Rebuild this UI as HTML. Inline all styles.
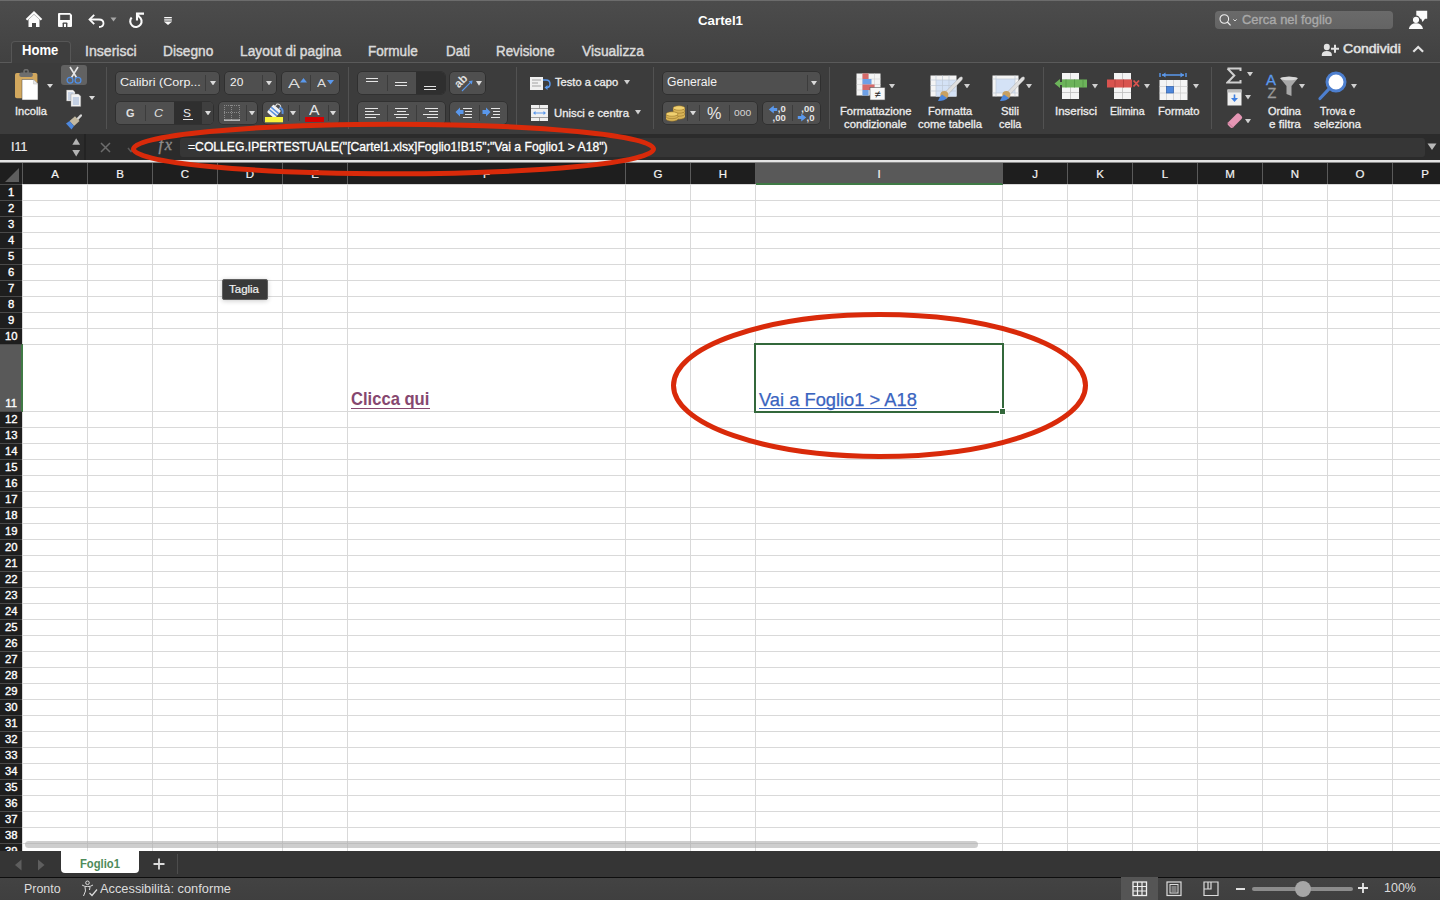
<!DOCTYPE html>
<html><head><meta charset="utf-8"><title>Cartel1</title>
<style>
html,body{margin:0;padding:0;}
body{width:1440px;height:900px;overflow:hidden;position:relative;background:#3c3c3c;font-family:"Liberation Sans",sans-serif;}
.t{position:absolute;white-space:pre;}
.r{position:absolute;}
</style></head><body>
<div class="r" style="left:0px;top:0px;width:1440px;height:62px;background:linear-gradient(#4c4c4c,#414141);"></div>
<div class="r" style="left:0px;top:0px;width:1440px;height:1px;background:#6c6c6c;"></div>
<div class="r" style="left:0px;top:62px;width:1440px;height:1px;background:#5a5a5a;"></div>
<div class="r" style="left:10.5px;top:40.5px;width:60px;height:22.5px;background:#3e3e3e;border:1px solid #565656;border-bottom:none;border-radius:4px 4px 0 0;box-sizing:border-box;"></div>
<div class="r" style="left:0px;top:63px;width:1440px;height:71px;background:#3c3c3c;"></div>
<div class="r" style="left:0px;top:134px;width:1440px;height:26px;background:#2b2b2b;"></div>
<div class="r" style="left:84px;top:134px;width:2px;height:26px;background:#232323;"></div>
<div class="r" style="left:180px;top:138px;width:1245px;height:19px;background:#363636;border-radius:3px;"></div>
<div class="r" style="left:0px;top:160px;width:1440px;height:2px;background:#e4e4e4;"></div>
<div class="r" style="left:0px;top:162px;width:1440px;height:1px;background:#8a8a8a;"></div>
<div class="r" style="left:0px;top:163px;width:1440px;height:21px;background:#1e1e1e;"></div>
<div class="r" style="left:22px;top:184px;width:1418px;height:667px;background:#ffffff;"></div>
<div class="r" style="left:0px;top:184px;width:22px;height:667px;background:#1e1e1e;"></div>
<div class="r" style="left:0px;top:851px;width:1440px;height:26px;background:#353535;"></div>
<div class="r" style="left:0px;top:877px;width:1440px;height:1px;background:#0e0e0e;"></div>
<div class="r" style="left:0px;top:878px;width:1440px;height:22px;background:linear-gradient(#434343,#3f3f3f);"></div>
<svg class="r" style="left:0px;top:184px;" width="1440" height="667" viewBox="0 0 1440 667"><rect x="22" y="0" width="1418" height="1" fill="#d9d9d9"/><rect x="22" y="16" width="1418" height="1" fill="#d9d9d9"/><rect x="22" y="32" width="1418" height="1" fill="#d9d9d9"/><rect x="22" y="48" width="1418" height="1" fill="#d9d9d9"/><rect x="22" y="64" width="1418" height="1" fill="#d9d9d9"/><rect x="22" y="80" width="1418" height="1" fill="#d9d9d9"/><rect x="22" y="96" width="1418" height="1" fill="#d9d9d9"/><rect x="22" y="112" width="1418" height="1" fill="#d9d9d9"/><rect x="22" y="128" width="1418" height="1" fill="#d9d9d9"/><rect x="22" y="144" width="1418" height="1" fill="#d9d9d9"/><rect x="22" y="160" width="1418" height="1" fill="#d9d9d9"/><rect x="22" y="227" width="1418" height="1" fill="#d9d9d9"/><rect x="22" y="243" width="1418" height="1" fill="#d9d9d9"/><rect x="22" y="259" width="1418" height="1" fill="#d9d9d9"/><rect x="22" y="275" width="1418" height="1" fill="#d9d9d9"/><rect x="22" y="291" width="1418" height="1" fill="#d9d9d9"/><rect x="22" y="307" width="1418" height="1" fill="#d9d9d9"/><rect x="22" y="323" width="1418" height="1" fill="#d9d9d9"/><rect x="22" y="339" width="1418" height="1" fill="#d9d9d9"/><rect x="22" y="355" width="1418" height="1" fill="#d9d9d9"/><rect x="22" y="371" width="1418" height="1" fill="#d9d9d9"/><rect x="22" y="387" width="1418" height="1" fill="#d9d9d9"/><rect x="22" y="403" width="1418" height="1" fill="#d9d9d9"/><rect x="22" y="419" width="1418" height="1" fill="#d9d9d9"/><rect x="22" y="435" width="1418" height="1" fill="#d9d9d9"/><rect x="22" y="451" width="1418" height="1" fill="#d9d9d9"/><rect x="22" y="467" width="1418" height="1" fill="#d9d9d9"/><rect x="22" y="483" width="1418" height="1" fill="#d9d9d9"/><rect x="22" y="499" width="1418" height="1" fill="#d9d9d9"/><rect x="22" y="515" width="1418" height="1" fill="#d9d9d9"/><rect x="22" y="531" width="1418" height="1" fill="#d9d9d9"/><rect x="22" y="547" width="1418" height="1" fill="#d9d9d9"/><rect x="22" y="563" width="1418" height="1" fill="#d9d9d9"/><rect x="22" y="579" width="1418" height="1" fill="#d9d9d9"/><rect x="22" y="595" width="1418" height="1" fill="#d9d9d9"/><rect x="22" y="611" width="1418" height="1" fill="#d9d9d9"/><rect x="22" y="627" width="1418" height="1" fill="#d9d9d9"/><rect x="22" y="643" width="1418" height="1" fill="#d9d9d9"/><rect x="22" y="659" width="1418" height="1" fill="#d9d9d9"/><rect x="22" y="0" width="1" height="667" fill="#d9d9d9"/><rect x="87" y="0" width="1" height="667" fill="#d9d9d9"/><rect x="152" y="0" width="1" height="667" fill="#d9d9d9"/><rect x="217" y="0" width="1" height="667" fill="#d9d9d9"/><rect x="282" y="0" width="1" height="667" fill="#d9d9d9"/><rect x="347" y="0" width="1" height="667" fill="#d9d9d9"/><rect x="625" y="0" width="1" height="667" fill="#d9d9d9"/><rect x="690" y="0" width="1" height="667" fill="#d9d9d9"/><rect x="755" y="0" width="1" height="667" fill="#d9d9d9"/><rect x="1002" y="0" width="1" height="667" fill="#d9d9d9"/><rect x="1067" y="0" width="1" height="667" fill="#d9d9d9"/><rect x="1132" y="0" width="1" height="667" fill="#d9d9d9"/><rect x="1197" y="0" width="1" height="667" fill="#d9d9d9"/><rect x="1262" y="0" width="1" height="667" fill="#d9d9d9"/><rect x="1327" y="0" width="1" height="667" fill="#d9d9d9"/><rect x="1392" y="0" width="1" height="667" fill="#d9d9d9"/></svg>
<div class="r" style="left:756px;top:163px;width:246px;height:21px;background:#595959;"></div>
<div class="r" style="left:756px;top:183px;width:247px;height:2px;background:#3f7a45;"></div>
<div class="r" style="left:0px;top:344px;width:22px;height:68px;background:#595959;"></div>
<div class="r" style="left:21px;top:344px;width:2px;height:68px;background:#3f7a45;"></div>
<svg class="r" style="left:0px;top:163px;" width="1440" height="21" viewBox="0 0 1440 21"><rect x="22" y="0" width="1" height="21" fill="#5a5a5a"/><rect x="87" y="0" width="1" height="21" fill="#5a5a5a"/><rect x="152" y="0" width="1" height="21" fill="#5a5a5a"/><rect x="217" y="0" width="1" height="21" fill="#5a5a5a"/><rect x="282" y="0" width="1" height="21" fill="#5a5a5a"/><rect x="347" y="0" width="1" height="21" fill="#5a5a5a"/><rect x="625" y="0" width="1" height="21" fill="#5a5a5a"/><rect x="690" y="0" width="1" height="21" fill="#5a5a5a"/><rect x="755" y="0" width="1" height="21" fill="#5a5a5a"/><rect x="1002" y="0" width="1" height="21" fill="#5a5a5a"/><rect x="1067" y="0" width="1" height="21" fill="#5a5a5a"/><rect x="1132" y="0" width="1" height="21" fill="#5a5a5a"/><rect x="1197" y="0" width="1" height="21" fill="#5a5a5a"/><rect x="1262" y="0" width="1" height="21" fill="#5a5a5a"/><rect x="1327" y="0" width="1" height="21" fill="#5a5a5a"/><rect x="1392" y="0" width="1" height="21" fill="#5a5a5a"/></svg>
<svg class="r" style="left:0px;top:163px;" width="22" height="21" viewBox="0 0 22 21"><path d="M5 19 L19 19 L19 5 Z" fill="#5e5e5e"/></svg>
<div class="t" style="left:-445.00px;width:1000px;text-align:center;top:168.77px;font-size:11.5px;line-height:11.5px;color:#f4f4f4;font-weight:normal;font-family:'Liberation Sans', sans-serif;-webkit-text-stroke:0.2px #f4f4f4;">A</div>
<div class="t" style="left:-380.00px;width:1000px;text-align:center;top:168.77px;font-size:11.5px;line-height:11.5px;color:#f4f4f4;font-weight:normal;font-family:'Liberation Sans', sans-serif;-webkit-text-stroke:0.2px #f4f4f4;">B</div>
<div class="t" style="left:-315.00px;width:1000px;text-align:center;top:168.77px;font-size:11.5px;line-height:11.5px;color:#f4f4f4;font-weight:normal;font-family:'Liberation Sans', sans-serif;-webkit-text-stroke:0.2px #f4f4f4;">C</div>
<div class="t" style="left:-250.00px;width:1000px;text-align:center;top:168.77px;font-size:11.5px;line-height:11.5px;color:#f4f4f4;font-weight:normal;font-family:'Liberation Sans', sans-serif;-webkit-text-stroke:0.2px #f4f4f4;">D</div>
<div class="t" style="left:-185.00px;width:1000px;text-align:center;top:168.77px;font-size:11.5px;line-height:11.5px;color:#f4f4f4;font-weight:normal;font-family:'Liberation Sans', sans-serif;-webkit-text-stroke:0.2px #f4f4f4;">E</div>
<div class="t" style="left:-13.50px;width:1000px;text-align:center;top:168.77px;font-size:11.5px;line-height:11.5px;color:#f4f4f4;font-weight:normal;font-family:'Liberation Sans', sans-serif;-webkit-text-stroke:0.2px #f4f4f4;">F</div>
<div class="t" style="left:158.00px;width:1000px;text-align:center;top:168.77px;font-size:11.5px;line-height:11.5px;color:#f4f4f4;font-weight:normal;font-family:'Liberation Sans', sans-serif;-webkit-text-stroke:0.2px #f4f4f4;">G</div>
<div class="t" style="left:223.00px;width:1000px;text-align:center;top:168.77px;font-size:11.5px;line-height:11.5px;color:#f4f4f4;font-weight:normal;font-family:'Liberation Sans', sans-serif;-webkit-text-stroke:0.2px #f4f4f4;">H</div>
<div class="t" style="left:379.00px;width:1000px;text-align:center;top:168.77px;font-size:11.5px;line-height:11.5px;color:#f4f4f4;font-weight:normal;font-family:'Liberation Sans', sans-serif;-webkit-text-stroke:0.2px #f4f4f4;">I</div>
<div class="t" style="left:535.00px;width:1000px;text-align:center;top:168.77px;font-size:11.5px;line-height:11.5px;color:#f4f4f4;font-weight:normal;font-family:'Liberation Sans', sans-serif;-webkit-text-stroke:0.2px #f4f4f4;">J</div>
<div class="t" style="left:600.00px;width:1000px;text-align:center;top:168.77px;font-size:11.5px;line-height:11.5px;color:#f4f4f4;font-weight:normal;font-family:'Liberation Sans', sans-serif;-webkit-text-stroke:0.2px #f4f4f4;">K</div>
<div class="t" style="left:665.00px;width:1000px;text-align:center;top:168.77px;font-size:11.5px;line-height:11.5px;color:#f4f4f4;font-weight:normal;font-family:'Liberation Sans', sans-serif;-webkit-text-stroke:0.2px #f4f4f4;">L</div>
<div class="t" style="left:730.00px;width:1000px;text-align:center;top:168.77px;font-size:11.5px;line-height:11.5px;color:#f4f4f4;font-weight:normal;font-family:'Liberation Sans', sans-serif;-webkit-text-stroke:0.2px #f4f4f4;">M</div>
<div class="t" style="left:795.00px;width:1000px;text-align:center;top:168.77px;font-size:11.5px;line-height:11.5px;color:#f4f4f4;font-weight:normal;font-family:'Liberation Sans', sans-serif;-webkit-text-stroke:0.2px #f4f4f4;">N</div>
<div class="t" style="left:860.00px;width:1000px;text-align:center;top:168.77px;font-size:11.5px;line-height:11.5px;color:#f4f4f4;font-weight:normal;font-family:'Liberation Sans', sans-serif;-webkit-text-stroke:0.2px #f4f4f4;">O</div>
<div class="t" style="left:925.00px;width:1000px;text-align:center;top:168.77px;font-size:11.5px;line-height:11.5px;color:#f4f4f4;font-weight:normal;font-family:'Liberation Sans', sans-serif;-webkit-text-stroke:0.2px #f4f4f4;">P</div>
<svg class="r" style="left:0px;top:184px;" width="22" height="667" viewBox="0 0 22 667"><rect x="0" y="0" width="22" height="1" fill="#4a4a4a"/><rect x="0" y="16" width="22" height="1" fill="#4a4a4a"/><rect x="0" y="32" width="22" height="1" fill="#4a4a4a"/><rect x="0" y="48" width="22" height="1" fill="#4a4a4a"/><rect x="0" y="64" width="22" height="1" fill="#4a4a4a"/><rect x="0" y="80" width="22" height="1" fill="#4a4a4a"/><rect x="0" y="96" width="22" height="1" fill="#4a4a4a"/><rect x="0" y="112" width="22" height="1" fill="#4a4a4a"/><rect x="0" y="128" width="22" height="1" fill="#4a4a4a"/><rect x="0" y="144" width="22" height="1" fill="#4a4a4a"/><rect x="0" y="160" width="22" height="1" fill="#4a4a4a"/><rect x="0" y="227" width="22" height="1" fill="#4a4a4a"/><rect x="0" y="243" width="22" height="1" fill="#4a4a4a"/><rect x="0" y="259" width="22" height="1" fill="#4a4a4a"/><rect x="0" y="275" width="22" height="1" fill="#4a4a4a"/><rect x="0" y="291" width="22" height="1" fill="#4a4a4a"/><rect x="0" y="307" width="22" height="1" fill="#4a4a4a"/><rect x="0" y="323" width="22" height="1" fill="#4a4a4a"/><rect x="0" y="339" width="22" height="1" fill="#4a4a4a"/><rect x="0" y="355" width="22" height="1" fill="#4a4a4a"/><rect x="0" y="371" width="22" height="1" fill="#4a4a4a"/><rect x="0" y="387" width="22" height="1" fill="#4a4a4a"/><rect x="0" y="403" width="22" height="1" fill="#4a4a4a"/><rect x="0" y="419" width="22" height="1" fill="#4a4a4a"/><rect x="0" y="435" width="22" height="1" fill="#4a4a4a"/><rect x="0" y="451" width="22" height="1" fill="#4a4a4a"/><rect x="0" y="467" width="22" height="1" fill="#4a4a4a"/><rect x="0" y="483" width="22" height="1" fill="#4a4a4a"/><rect x="0" y="499" width="22" height="1" fill="#4a4a4a"/><rect x="0" y="515" width="22" height="1" fill="#4a4a4a"/><rect x="0" y="531" width="22" height="1" fill="#4a4a4a"/><rect x="0" y="547" width="22" height="1" fill="#4a4a4a"/><rect x="0" y="563" width="22" height="1" fill="#4a4a4a"/><rect x="0" y="579" width="22" height="1" fill="#4a4a4a"/><rect x="0" y="595" width="22" height="1" fill="#4a4a4a"/><rect x="0" y="611" width="22" height="1" fill="#4a4a4a"/><rect x="0" y="627" width="22" height="1" fill="#4a4a4a"/><rect x="0" y="643" width="22" height="1" fill="#4a4a4a"/><rect x="0" y="659" width="22" height="1" fill="#4a4a4a"/></svg>
<div class="t" style="left:-488.80px;width:1000px;text-align:center;top:187.23px;font-size:11.3px;line-height:11.3px;color:#ffffff;font-weight:normal;font-family:'Liberation Sans', sans-serif;-webkit-text-stroke:0.35px #fff;">1</div>
<div class="t" style="left:-488.80px;width:1000px;text-align:center;top:203.23px;font-size:11.3px;line-height:11.3px;color:#ffffff;font-weight:normal;font-family:'Liberation Sans', sans-serif;-webkit-text-stroke:0.35px #fff;">2</div>
<div class="t" style="left:-488.80px;width:1000px;text-align:center;top:219.23px;font-size:11.3px;line-height:11.3px;color:#ffffff;font-weight:normal;font-family:'Liberation Sans', sans-serif;-webkit-text-stroke:0.35px #fff;">3</div>
<div class="t" style="left:-488.80px;width:1000px;text-align:center;top:235.23px;font-size:11.3px;line-height:11.3px;color:#ffffff;font-weight:normal;font-family:'Liberation Sans', sans-serif;-webkit-text-stroke:0.35px #fff;">4</div>
<div class="t" style="left:-488.80px;width:1000px;text-align:center;top:251.23px;font-size:11.3px;line-height:11.3px;color:#ffffff;font-weight:normal;font-family:'Liberation Sans', sans-serif;-webkit-text-stroke:0.35px #fff;">5</div>
<div class="t" style="left:-488.80px;width:1000px;text-align:center;top:267.23px;font-size:11.3px;line-height:11.3px;color:#ffffff;font-weight:normal;font-family:'Liberation Sans', sans-serif;-webkit-text-stroke:0.35px #fff;">6</div>
<div class="t" style="left:-488.80px;width:1000px;text-align:center;top:283.23px;font-size:11.3px;line-height:11.3px;color:#ffffff;font-weight:normal;font-family:'Liberation Sans', sans-serif;-webkit-text-stroke:0.35px #fff;">7</div>
<div class="t" style="left:-488.80px;width:1000px;text-align:center;top:299.23px;font-size:11.3px;line-height:11.3px;color:#ffffff;font-weight:normal;font-family:'Liberation Sans', sans-serif;-webkit-text-stroke:0.35px #fff;">8</div>
<div class="t" style="left:-488.80px;width:1000px;text-align:center;top:315.23px;font-size:11.3px;line-height:11.3px;color:#ffffff;font-weight:normal;font-family:'Liberation Sans', sans-serif;-webkit-text-stroke:0.35px #fff;">9</div>
<div class="t" style="left:-488.80px;width:1000px;text-align:center;top:331.23px;font-size:11.3px;line-height:11.3px;color:#ffffff;font-weight:normal;font-family:'Liberation Sans', sans-serif;-webkit-text-stroke:0.35px #fff;">10</div>
<div class="t" style="left:-488.80px;width:1000px;text-align:center;top:398.23px;font-size:11.3px;line-height:11.3px;color:#ffffff;font-weight:normal;font-family:'Liberation Sans', sans-serif;-webkit-text-stroke:0.35px #fff;">11</div>
<div class="t" style="left:-488.80px;width:1000px;text-align:center;top:414.23px;font-size:11.3px;line-height:11.3px;color:#ffffff;font-weight:normal;font-family:'Liberation Sans', sans-serif;-webkit-text-stroke:0.35px #fff;">12</div>
<div class="t" style="left:-488.80px;width:1000px;text-align:center;top:430.23px;font-size:11.3px;line-height:11.3px;color:#ffffff;font-weight:normal;font-family:'Liberation Sans', sans-serif;-webkit-text-stroke:0.35px #fff;">13</div>
<div class="t" style="left:-488.80px;width:1000px;text-align:center;top:446.23px;font-size:11.3px;line-height:11.3px;color:#ffffff;font-weight:normal;font-family:'Liberation Sans', sans-serif;-webkit-text-stroke:0.35px #fff;">14</div>
<div class="t" style="left:-488.80px;width:1000px;text-align:center;top:462.23px;font-size:11.3px;line-height:11.3px;color:#ffffff;font-weight:normal;font-family:'Liberation Sans', sans-serif;-webkit-text-stroke:0.35px #fff;">15</div>
<div class="t" style="left:-488.80px;width:1000px;text-align:center;top:478.23px;font-size:11.3px;line-height:11.3px;color:#ffffff;font-weight:normal;font-family:'Liberation Sans', sans-serif;-webkit-text-stroke:0.35px #fff;">16</div>
<div class="t" style="left:-488.80px;width:1000px;text-align:center;top:494.23px;font-size:11.3px;line-height:11.3px;color:#ffffff;font-weight:normal;font-family:'Liberation Sans', sans-serif;-webkit-text-stroke:0.35px #fff;">17</div>
<div class="t" style="left:-488.80px;width:1000px;text-align:center;top:510.23px;font-size:11.3px;line-height:11.3px;color:#ffffff;font-weight:normal;font-family:'Liberation Sans', sans-serif;-webkit-text-stroke:0.35px #fff;">18</div>
<div class="t" style="left:-488.80px;width:1000px;text-align:center;top:526.23px;font-size:11.3px;line-height:11.3px;color:#ffffff;font-weight:normal;font-family:'Liberation Sans', sans-serif;-webkit-text-stroke:0.35px #fff;">19</div>
<div class="t" style="left:-488.80px;width:1000px;text-align:center;top:542.23px;font-size:11.3px;line-height:11.3px;color:#ffffff;font-weight:normal;font-family:'Liberation Sans', sans-serif;-webkit-text-stroke:0.35px #fff;">20</div>
<div class="t" style="left:-488.80px;width:1000px;text-align:center;top:558.23px;font-size:11.3px;line-height:11.3px;color:#ffffff;font-weight:normal;font-family:'Liberation Sans', sans-serif;-webkit-text-stroke:0.35px #fff;">21</div>
<div class="t" style="left:-488.80px;width:1000px;text-align:center;top:574.23px;font-size:11.3px;line-height:11.3px;color:#ffffff;font-weight:normal;font-family:'Liberation Sans', sans-serif;-webkit-text-stroke:0.35px #fff;">22</div>
<div class="t" style="left:-488.80px;width:1000px;text-align:center;top:590.23px;font-size:11.3px;line-height:11.3px;color:#ffffff;font-weight:normal;font-family:'Liberation Sans', sans-serif;-webkit-text-stroke:0.35px #fff;">23</div>
<div class="t" style="left:-488.80px;width:1000px;text-align:center;top:606.23px;font-size:11.3px;line-height:11.3px;color:#ffffff;font-weight:normal;font-family:'Liberation Sans', sans-serif;-webkit-text-stroke:0.35px #fff;">24</div>
<div class="t" style="left:-488.80px;width:1000px;text-align:center;top:622.23px;font-size:11.3px;line-height:11.3px;color:#ffffff;font-weight:normal;font-family:'Liberation Sans', sans-serif;-webkit-text-stroke:0.35px #fff;">25</div>
<div class="t" style="left:-488.80px;width:1000px;text-align:center;top:638.23px;font-size:11.3px;line-height:11.3px;color:#ffffff;font-weight:normal;font-family:'Liberation Sans', sans-serif;-webkit-text-stroke:0.35px #fff;">26</div>
<div class="t" style="left:-488.80px;width:1000px;text-align:center;top:654.23px;font-size:11.3px;line-height:11.3px;color:#ffffff;font-weight:normal;font-family:'Liberation Sans', sans-serif;-webkit-text-stroke:0.35px #fff;">27</div>
<div class="t" style="left:-488.80px;width:1000px;text-align:center;top:670.23px;font-size:11.3px;line-height:11.3px;color:#ffffff;font-weight:normal;font-family:'Liberation Sans', sans-serif;-webkit-text-stroke:0.35px #fff;">28</div>
<div class="t" style="left:-488.80px;width:1000px;text-align:center;top:686.23px;font-size:11.3px;line-height:11.3px;color:#ffffff;font-weight:normal;font-family:'Liberation Sans', sans-serif;-webkit-text-stroke:0.35px #fff;">29</div>
<div class="t" style="left:-488.80px;width:1000px;text-align:center;top:702.23px;font-size:11.3px;line-height:11.3px;color:#ffffff;font-weight:normal;font-family:'Liberation Sans', sans-serif;-webkit-text-stroke:0.35px #fff;">30</div>
<div class="t" style="left:-488.80px;width:1000px;text-align:center;top:718.23px;font-size:11.3px;line-height:11.3px;color:#ffffff;font-weight:normal;font-family:'Liberation Sans', sans-serif;-webkit-text-stroke:0.35px #fff;">31</div>
<div class="t" style="left:-488.80px;width:1000px;text-align:center;top:734.23px;font-size:11.3px;line-height:11.3px;color:#ffffff;font-weight:normal;font-family:'Liberation Sans', sans-serif;-webkit-text-stroke:0.35px #fff;">32</div>
<div class="t" style="left:-488.80px;width:1000px;text-align:center;top:750.23px;font-size:11.3px;line-height:11.3px;color:#ffffff;font-weight:normal;font-family:'Liberation Sans', sans-serif;-webkit-text-stroke:0.35px #fff;">33</div>
<div class="t" style="left:-488.80px;width:1000px;text-align:center;top:766.23px;font-size:11.3px;line-height:11.3px;color:#ffffff;font-weight:normal;font-family:'Liberation Sans', sans-serif;-webkit-text-stroke:0.35px #fff;">34</div>
<div class="t" style="left:-488.80px;width:1000px;text-align:center;top:782.23px;font-size:11.3px;line-height:11.3px;color:#ffffff;font-weight:normal;font-family:'Liberation Sans', sans-serif;-webkit-text-stroke:0.35px #fff;">35</div>
<div class="t" style="left:-488.80px;width:1000px;text-align:center;top:798.23px;font-size:11.3px;line-height:11.3px;color:#ffffff;font-weight:normal;font-family:'Liberation Sans', sans-serif;-webkit-text-stroke:0.35px #fff;">36</div>
<div class="t" style="left:-488.80px;width:1000px;text-align:center;top:814.23px;font-size:11.3px;line-height:11.3px;color:#ffffff;font-weight:normal;font-family:'Liberation Sans', sans-serif;-webkit-text-stroke:0.35px #fff;">37</div>
<div class="t" style="left:-488.80px;width:1000px;text-align:center;top:830.23px;font-size:11.3px;line-height:11.3px;color:#ffffff;font-weight:normal;font-family:'Liberation Sans', sans-serif;-webkit-text-stroke:0.35px #fff;">38</div>
<div class="t" style="left:-488.80px;width:1000px;text-align:center;top:846.23px;font-size:11.3px;line-height:11.3px;color:#ffffff;font-weight:normal;font-family:'Liberation Sans', sans-serif;-webkit-text-stroke:0.35px #fff;">39</div>
<div class="r" style="left:0px;top:851px;width:1440px;height:26px;background:#353535;"></div>
<div class="r" style="left:0px;top:877px;width:1440px;height:1px;background:#0e0e0e;"></div>
<div class="r" style="left:0px;top:878px;width:1440px;height:22px;background:linear-gradient(#434343,#3f3f3f);"></div>
<div class="t" style="left:697.50px;top:14.00px;font-size:13px;line-height:13px;color:#ffffff;font-weight:bold;font-family:'Liberation Sans', sans-serif;transform:scaleX(1.0209);transform-origin:0 0;">Cartel1</div>
<div class="t" style="left:22.00px;top:43.72px;font-size:13.8px;line-height:13.8px;color:#ffffff;font-weight:bold;font-family:'Liberation Sans', sans-serif;transform:scaleX(0.9468);transform-origin:0 0;">Home</div>
<div class="t" style="left:85.00px;top:43.55px;font-size:14px;line-height:14px;color:#dadada;font-weight:normal;font-family:'Liberation Sans', sans-serif;-webkit-text-stroke:0.45px #dadada;transform:scaleX(1.0079);transform-origin:0 0;">Inserisci</div>
<div class="t" style="left:163.00px;top:43.55px;font-size:14px;line-height:14px;color:#dadada;font-weight:normal;font-family:'Liberation Sans', sans-serif;-webkit-text-stroke:0.45px #dadada;transform:scaleX(0.9783);transform-origin:0 0;">Disegno</div>
<div class="t" style="left:240.00px;top:43.55px;font-size:14px;line-height:14px;color:#dadada;font-weight:normal;font-family:'Liberation Sans', sans-serif;-webkit-text-stroke:0.45px #dadada;transform:scaleX(0.9854);transform-origin:0 0;">Layout di pagina</div>
<div class="t" style="left:368.30px;top:43.55px;font-size:14px;line-height:14px;color:#dadada;font-weight:normal;font-family:'Liberation Sans', sans-serif;-webkit-text-stroke:0.45px #dadada;transform:scaleX(0.9680);transform-origin:0 0;">Formule</div>
<div class="t" style="left:445.50px;top:43.55px;font-size:14px;line-height:14px;color:#dadada;font-weight:normal;font-family:'Liberation Sans', sans-serif;-webkit-text-stroke:0.45px #dadada;transform:scaleX(0.9600);transform-origin:0 0;">Dati</div>
<div class="t" style="left:496.30px;top:43.55px;font-size:14px;line-height:14px;color:#dadada;font-weight:normal;font-family:'Liberation Sans', sans-serif;-webkit-text-stroke:0.45px #dadada;transform:scaleX(0.9532);transform-origin:0 0;">Revisione</div>
<div class="t" style="left:582.00px;top:43.55px;font-size:14px;line-height:14px;color:#dadada;font-weight:normal;font-family:'Liberation Sans', sans-serif;-webkit-text-stroke:0.45px #dadada;transform:scaleX(0.9861);transform-origin:0 0;">Visualizza</div>
<div class="r" style="left:1215px;top:11px;width:178px;height:18px;background:linear-gradient(#6a6a6a,#646464);border-radius:4px;"></div>
<div class="t" style="left:1242.00px;top:14.33px;font-size:12.6px;line-height:12.6px;color:#a9a9a9;font-weight:normal;font-family:'Liberation Sans', sans-serif;-webkit-text-stroke:0.35px #a9a9a9;transform:scaleX(1.0280);transform-origin:0 0;">Cerca nel foglio</div>
<div class="t" style="left:1343.00px;top:42.00px;font-size:13px;line-height:13px;color:#e2e2e2;font-weight:normal;font-family:'Liberation Sans', sans-serif;-webkit-text-stroke:0.5px #e2e2e2;transform:scaleX(1.0809);transform-origin:0 0;">Condividi</div>
<div class="t" style="left:15.00px;top:106.90px;font-size:10.4px;line-height:10.4px;color:#ececec;font-weight:normal;font-family:'Liberation Sans', sans-serif;-webkit-text-stroke:0.3px #ececec;transform:scaleX(1.0644);transform-origin:0 0;">Incolla</div>
<div class="t" style="left:554.50px;top:78.30px;font-size:10.4px;line-height:10.4px;color:#ececec;font-weight:normal;font-family:'Liberation Sans', sans-serif;-webkit-text-stroke:0.3px #ececec;transform:scaleX(1.0716);transform-origin:0 0;">Testo a capo</div>
<div class="t" style="left:554.00px;top:108.50px;font-size:10.4px;line-height:10.4px;color:#ececec;font-weight:normal;font-family:'Liberation Sans', sans-serif;-webkit-text-stroke:0.3px #ececec;transform:scaleX(1.0903);transform-origin:0 0;">Unisci e centra</div>
<div class="t" style="left:839.50px;top:107.40px;font-size:10.4px;line-height:10.4px;color:#ececec;font-weight:normal;font-family:'Liberation Sans', sans-serif;-webkit-text-stroke:0.3px #ececec;transform:scaleX(1.0756);transform-origin:0 0;">Formattazione</div>
<div class="t" style="left:843.75px;top:119.70px;font-size:10.4px;line-height:10.4px;color:#ececec;font-weight:normal;font-family:'Liberation Sans', sans-serif;-webkit-text-stroke:0.3px #ececec;transform:scaleX(1.0835);transform-origin:0 0;">condizionale</div>
<div class="t" style="left:927.80px;top:107.40px;font-size:10.4px;line-height:10.4px;color:#ececec;font-weight:normal;font-family:'Liberation Sans', sans-serif;-webkit-text-stroke:0.3px #ececec;transform:scaleX(1.0622);transform-origin:0 0;">Formatta</div>
<div class="t" style="left:918.00px;top:119.70px;font-size:10.4px;line-height:10.4px;color:#ececec;font-weight:normal;font-family:'Liberation Sans', sans-serif;-webkit-text-stroke:0.3px #ececec;transform:scaleX(1.0853);transform-origin:0 0;">come tabella</div>
<div class="t" style="left:1001.40px;top:107.40px;font-size:10.4px;line-height:10.4px;color:#ececec;font-weight:normal;font-family:'Liberation Sans', sans-serif;-webkit-text-stroke:0.3px #ececec;transform:scaleX(1.0800);transform-origin:0 0;">Stili</div>
<div class="t" style="left:999.30px;top:119.70px;font-size:10.4px;line-height:10.4px;color:#ececec;font-weight:normal;font-family:'Liberation Sans', sans-serif;-webkit-text-stroke:0.3px #ececec;transform:scaleX(1.0472);transform-origin:0 0;">cella</div>
<div class="t" style="left:1054.60px;top:107.00px;font-size:10.4px;line-height:10.4px;color:#ececec;font-weight:normal;font-family:'Liberation Sans', sans-serif;-webkit-text-stroke:0.3px #ececec;transform:scaleX(1.1037);transform-origin:0 0;">Inserisci</div>
<div class="t" style="left:1110.40px;top:107.00px;font-size:10.4px;line-height:10.4px;color:#ececec;font-weight:normal;font-family:'Liberation Sans', sans-serif;-webkit-text-stroke:0.3px #ececec;transform:scaleX(1.0146);transform-origin:0 0;">Elimina</div>
<div class="t" style="left:1158.00px;top:107.00px;font-size:10.4px;line-height:10.4px;color:#ececec;font-weight:normal;font-family:'Liberation Sans', sans-serif;-webkit-text-stroke:0.3px #ececec;transform:scaleX(1.0691);transform-origin:0 0;">Formato</div>
<div class="t" style="left:1268.00px;top:107.00px;font-size:10.4px;line-height:10.4px;color:#ececec;font-weight:normal;font-family:'Liberation Sans', sans-serif;-webkit-text-stroke:0.3px #ececec;transform:scaleX(1.0571);transform-origin:0 0;">Ordina</div>
<div class="t" style="left:1268.60px;top:119.50px;font-size:10.4px;line-height:10.4px;color:#ececec;font-weight:normal;font-family:'Liberation Sans', sans-serif;-webkit-text-stroke:0.3px #ececec;transform:scaleX(1.1227);transform-origin:0 0;">e filtra</div>
<div class="t" style="left:1319.80px;top:107.00px;font-size:10.4px;line-height:10.4px;color:#ececec;font-weight:normal;font-family:'Liberation Sans', sans-serif;-webkit-text-stroke:0.3px #ececec;transform:scaleX(1.0094);transform-origin:0 0;">Trova e</div>
<div class="t" style="left:1314.00px;top:119.50px;font-size:10.4px;line-height:10.4px;color:#ececec;font-weight:normal;font-family:'Liberation Sans', sans-serif;-webkit-text-stroke:0.3px #ececec;transform:scaleX(1.0695);transform-origin:0 0;">seleziona</div>
<div class="t" style="left:10.50px;top:140.00px;font-size:13px;line-height:13px;color:#ededed;font-weight:normal;font-family:'Liberation Sans', sans-serif;-webkit-text-stroke:0.2px #ededed;transform:scaleX(0.9529);transform-origin:0 0;">I11</div>
<div class="t" style="left:188.00px;top:141.37px;font-size:12.2px;line-height:12.2px;color:#ffffff;font-weight:normal;font-family:'Liberation Sans', sans-serif;-webkit-text-stroke:0.3px #ffffff;transform:scaleX(0.9976);transform-origin:0 0;">=COLLEG.IPERTESTUALE(&quot;[Cartel1.xlsx]Foglio1!B15&quot;;&quot;Vai a Foglio1 &gt; A18&quot;)</div>
<div class="t" style="left:351.25px;top:390.14px;font-size:18.5px;line-height:18.5px;color:#86476f;font-weight:bold;font-family:'Liberation Sans', sans-serif;transform:scaleX(0.8966);transform-origin:0 0;">Clicca qui</div>
<div class="r" style="left:351px;top:408px;width:79px;height:1.3px;background:#86476f;"></div>
<div class="t" style="left:759.00px;top:391.19px;font-size:18.2px;line-height:18.2px;color:#3a64c0;font-weight:normal;font-family:'Liberation Sans', sans-serif;-webkit-text-stroke:0.25px #3a64c0;transform:scaleX(1.0064);transform-origin:0 0;">Vai a Foglio1 &gt; A18</div>
<div class="r" style="left:759px;top:408px;width:158px;height:1.3px;background:#3a64c0;"></div>
<div class="r" style="left:754px;top:343px;width:250px;height:70px;background:transparent;border:2px solid #33683b;box-sizing:border-box;"></div>
<div class="r" style="left:999px;top:408px;width:5px;height:5px;background:#33683b;border:1px solid #fff;box-sizing:content-box;left:999px;top:408px;"></div>
<div class="r" style="left:222px;top:279px;width:46px;height:20.5px;background:#393939;border:1px solid #606060;box-sizing:border-box;border-radius:2px;box-shadow:0 1px 5px rgba(0,0,0,0.2);"></div>
<div class="t" style="left:229.00px;top:283.69px;font-size:11px;line-height:11px;color:#f2f2f2;font-weight:normal;font-family:'Liberation Sans', sans-serif;-webkit-text-stroke:0.2px #f2f2f2;transform:scaleX(1.0438);transform-origin:0 0;">Taglia</div>
<div class="r" style="left:61px;top:851px;width:78px;height:22px;background:#ffffff;border-radius:0 0 4px 4px;"></div>
<div class="t" style="left:79.70px;top:857.55px;font-size:12.7px;line-height:12.7px;color:#4e8b5a;font-weight:bold;font-family:'Liberation Sans', sans-serif;transform:scaleX(0.8859);transform-origin:0 0;">Foglio1</div>
<div class="r" style="left:177px;top:854px;width:1px;height:20px;background:#4d4d4d;"></div>
<div class="t" style="left:24.20px;top:882.59px;font-size:12.3px;line-height:12.3px;color:#dcdcdc;font-weight:normal;font-family:'Liberation Sans', sans-serif;transform:scaleX(1.0100);transform-origin:0 0;">Pronto</div>
<div class="t" style="left:99.50px;top:882.59px;font-size:12.3px;line-height:12.3px;color:#dcdcdc;font-weight:normal;font-family:'Liberation Sans', sans-serif;transform:scaleX(1.0415);transform-origin:0 0;">Accessibilità: conforme</div>
<div class="t" style="left:1384.00px;top:882.29px;font-size:12.3px;line-height:12.3px;color:#dcdcdc;font-weight:normal;font-family:'Liberation Sans', sans-serif;transform:scaleX(1.0172);transform-origin:0 0;">100%</div>
<svg class="r" style="left:0px;top:0px;pointer-events:none;z-index:10;" width="1440" height="900" viewBox="0 0 1440 900"><ellipse cx="393.5" cy="149" rx="260" ry="24.8" fill="none" stroke="#d92a0a" stroke-width="5"/><ellipse cx="879.5" cy="385.5" rx="206" ry="71" fill="none" stroke="#d92a0a" stroke-width="5"/></svg>
<svg class="r" style="left:24px;top:10px;" width="20" height="19" viewBox="0 0 20 19"><path d="M2.5 9.8 L10 2.6 L17.5 9.8" fill="none" stroke="#fbfbfb" stroke-width="2.2" stroke-linejoin="miter"/><path d="M4.5 9.5 L10 4.6 L15.5 9.5 L15.5 17 L12 17 L12 13 L8 13 L8 17 L4.5 17 Z" fill="#fbfbfb"/></svg>
<svg class="r" style="left:56px;top:11px;" width="18" height="18" viewBox="0 0 18 18"><path d="M2 3 Q2 2 3 2 L14 2 L16 4 L16 15 Q16 16 15 16 L3 16 Q2 16 2 15 Z" fill="#fbfbfb"/><rect x="4.2" y="3.8" width="9.6" height="5.2" fill="#484848"/><path d="M6.6 16 L6.6 12.2 Q6.6 11.4 7.4 11.4 L10.6 11.4 Q11.4 11.4 11.4 12.2 L11.4 16 Z" fill="#484848"/><rect x="8" y="12.8" width="2" height="3.2" fill="#fbfbfb"/></svg>
<svg class="r" style="left:87px;top:11px;" width="20" height="18" viewBox="0 0 20 18"><path d="M3 8.5 L12 8.5 Q16.5 8.5 16.5 12.3 Q16.5 16 12 16" fill="none" stroke="#fbfbfb" stroke-width="1.8"/><path d="M7.2 3.8 L2.5 8.5 L7.2 13.2" fill="none" stroke="#fbfbfb" stroke-width="1.8" stroke-linejoin="miter"/></svg>
<svg class="r" style="left:110px;top:17px;" width="7" height="5" viewBox="0 0 7 5"><path d="M0.5 0.5 L6.5 0.5 L3.5 4.5 Z" fill="#a8a8a8"/></svg>
<svg class="r" style="left:127px;top:11px;" width="19" height="19" viewBox="0 0 19 19"><path d="M4.66 6.49 A5.7 5.7 0 1 0 12.0 5.52 L10.2 3.4" fill="none" stroke="#fbfbfb" stroke-width="2.1"/><path d="M10 9.6 L10 2.6 L17 2.6" fill="none" stroke="#fbfbfb" stroke-width="2.1" stroke-linejoin="miter"/></svg>
<svg class="r" style="left:163px;top:16px;" width="10" height="10" viewBox="0 0 10 10"><rect x="1.2" y="1" width="7.6" height="1.3" fill="#fbfbfb"/><rect x="1.2" y="3.3" width="7.6" height="1.3" fill="#fbfbfb"/><path d="M0.8 5.4 L9.2 5.4 L5 9 Z" fill="#fbfbfb"/></svg>
<svg class="r" style="left:1217px;top:12px;" width="24" height="16" viewBox="0 0 24 16"><circle cx="7.3" cy="7" r="4.3" fill="none" stroke="#f0f0f0" stroke-width="1.1"/><path d="M10.3 10 L13.6 13.4" stroke="#f0f0f0" stroke-width="1.2"/><path d="M16.3 7.3 L18 9 L19.7 7.3" fill="none" stroke="#dcdcdc" stroke-width="1"/></svg>
<svg class="r" style="left:1407px;top:9px;" width="22" height="22" viewBox="0 0 22 22"><path d="M9.3 1.8 L20.2 1.8 L20.2 9.7 L18 9.7 L15.5 13 L14.2 9.7 L9.3 9.7 Z" fill="#fbfbfb"/><circle cx="9" cy="10.8" r="3.7" fill="#fbfbfb" stroke="#484848" stroke-width="1.2"/><path d="M1.8 20 Q3 14.2 9 14.2 Q15 14.2 16 20 Z" fill="#fbfbfb"/></svg>
<svg class="r" style="left:1320px;top:42px;" width="22" height="16" viewBox="0 0 22 16"><ellipse cx="6.8" cy="5" rx="3" ry="3.2" fill="#e2e2e2"/><path d="M1.8 14 L1.8 12.5 Q2 9 6.8 9 Q11.6 9 11.8 12.5 L11.8 14 Z" fill="#e2e2e2"/><path d="M15 2.8 L15 10.8 M11 6.8 L19 6.8" stroke="#e2e2e2" stroke-width="2"/></svg>
<svg class="r" style="left:1411px;top:44px;" width="14" height="10" viewBox="0 0 14 10"><path d="M2.3 7.8 L7.2 3 L12.1 7.8" fill="none" stroke="#e2e2e2" stroke-width="2.2"/></svg>
<svg class="r" style="left:70px;top:137px;" width="12" height="22" viewBox="0 0 12 22"><path d="M2.3 7.7 L6.2 1.3 L10.1 7.7 Z" fill="#b4b4b4"/><path d="M2.3 13 L6.2 19.6 L10.1 13 Z" fill="#b4b4b4"/></svg>
<svg class="r" style="left:99px;top:141px;" width="13" height="13" viewBox="0 0 13 13"><path d="M2 2 L11 11 M11 2 L2 11" stroke="#6c6c6c" stroke-width="1.5"/></svg>
<svg class="r" style="left:126px;top:141px;" width="12" height="13" viewBox="0 0 12 13"><path d="M2 7 L5 10.5 L10.5 2.5" fill="none" stroke="#5a5a5a" stroke-width="1.5"/></svg>
<div class="t" style="left:158.50px;top:137.33px;font-size:16.5px;line-height:16.5px;color:#8e8e8e;font-weight:normal;font-family:'Liberation Serif', serif;font-style:italic;letter-spacing:1.6px;-webkit-text-stroke:0.3px #8e8e8e;">fx</div>
<svg class="r" style="left:1427px;top:141px;" width="10" height="10" viewBox="0 0 10 10"><path d="M0.5 2.5 L9.5 2.5 L5 9 Z" fill="#b8b8b8"/></svg>
<div class="r" style="left:106px;top:67px;width:1px;height:62px;background:#525252;"></div>
<div class="r" style="left:348px;top:67px;width:1px;height:62px;background:#525252;"></div>
<div class="r" style="left:516px;top:67px;width:1px;height:62px;background:#525252;"></div>
<div class="r" style="left:653px;top:67px;width:1px;height:62px;background:#525252;"></div>
<div class="r" style="left:829px;top:67px;width:1px;height:62px;background:#525252;"></div>
<div class="r" style="left:1043px;top:67px;width:1px;height:62px;background:#525252;"></div>
<div class="r" style="left:1211px;top:67px;width:1px;height:62px;background:#525252;"></div>
<div class="r" style="left:61px;top:65px;width:26px;height:20px;background:#626262;border-radius:3px;"></div>
<svg class="r" style="left:47.0px;top:83.5px;" width="6" height="4" viewBox="0 0 6 4"><path d="M0 0 L6 0 L3.0 4 Z" fill="#dadada"/></svg>
<svg class="r" style="left:88.5px;top:96.0px;" width="6" height="4" viewBox="0 0 6 4"><path d="M0 0 L6 0 L3.0 4 Z" fill="#dadada"/></svg>
<svg class="r" style="left:14px;top:69px;" width="26" height="32" viewBox="0 0 26 32"><rect x="1" y="4" width="22.4" height="25.2" rx="1.8" fill="#d2a85e"/><rect x="5.3" y="3.5" width="13.6" height="4.6" rx="2" fill="#6e6e6e"/><circle cx="12.1" cy="2.7" r="2.1" fill="none" stroke="#6e6e6e" stroke-width="1.6"/><path d="M8 10.5 L19.5 10.5 L24 15 L24 31 L8 31 Z" fill="#ffffff" stroke="#444" stroke-width="0.5"/><path d="M19.5 10.5 L19.5 15 L24 15" fill="#e8e8e8" stroke="#bbb" stroke-width="0.5"/></svg>
<svg class="r" style="left:64px;top:66px;" width="20" height="19" viewBox="0 0 20 19"><path d="M6 1 L12.5 11.5 M14 1 L7.5 11.5" stroke="#e8e8e8" stroke-width="1.6"/><circle cx="6" cy="14.2" r="2.9" fill="none" stroke="#4f8fe6" stroke-width="1.3"/><circle cx="14" cy="14.2" r="2.9" fill="none" stroke="#4f8fe6" stroke-width="1.3"/></svg>
<svg class="r" style="left:65px;top:89px;" width="18" height="19" viewBox="0 0 18 19"><path d="M1.5 1 L8 1 L10 3 L10 12 L1.5 12 Z" fill="#f2f2f2" stroke="#888" stroke-width="0.4"/><path d="M3 4 L8.5 4 M3 6 L8.5 6 M3 8 L8.5 8 M3 10 L8.5 10" stroke="#8aa6d0" stroke-width="0.8"/><path d="M6 5 L13.5 5 L15.8 7.3 L15.8 17.5 L6 17.5 Z" fill="#f2f2f2" stroke="#888" stroke-width="0.4"/><path d="M7.8 9 L14 9 M7.8 11 L14 11 M7.8 13 L14 13 M7.8 15 L14 15" stroke="#8aa6d0" stroke-width="0.9"/></svg>
<svg class="r" style="left:65px;top:113px;" width="18" height="17" viewBox="0 0 18 17"><path d="M10 7 L15 1.8 Q16.3 0.8 17 2 Q17.3 3 16.3 3.8 L11.5 8.8 Z" fill="#d8d8d8"/><path d="M4.5 8 L10 3.2 L14.5 8 L9 13 Z" fill="#c2b8a0"/><path d="M1 10.5 L4.5 8 L9 13 L6.5 16.5 Z" fill="#4d87dc"/></svg>
<div class="r" style="left:116px;top:72px;width:103px;height:22px;background:#4f4f4f;border-radius:4px;box-shadow:0 0 0 0.6px rgba(0,0,0,0.35);"></div>
<div class="r" style="left:205px;top:75px;width:1px;height:16px;background:#3c3c3c;"></div>
<div class="t" style="left:120.30px;top:75.80px;font-size:11.7px;line-height:11.7px;color:#f2f2f2;font-weight:normal;font-family:'Liberation Sans', sans-serif;transform:scaleX(1.0727);transform-origin:0 0;">Calibri (Corp...</div>
<svg class="r" style="left:209.5px;top:80.75px;" width="6" height="4.5" viewBox="0 0 6 4.5"><path d="M0 0 L6 0 L3.0 4.5 Z" fill="#dadada"/></svg>
<div class="r" style="left:225px;top:72px;width:51px;height:22px;background:#4f4f4f;border-radius:4px;box-shadow:0 0 0 0.6px rgba(0,0,0,0.35);"></div>
<div class="r" style="left:262px;top:75px;width:1px;height:16px;background:#3c3c3c;"></div>
<div class="t" style="left:229.70px;top:75.80px;font-size:11.7px;line-height:11.7px;color:#f2f2f2;font-weight:normal;font-family:'Liberation Sans', sans-serif;transform:scaleX(1.0220);transform-origin:0 0;">20</div>
<svg class="r" style="left:265.5px;top:80.75px;" width="6" height="4.5" viewBox="0 0 6 4.5"><path d="M0 0 L6 0 L3.0 4.5 Z" fill="#dadada"/></svg>
<div class="r" style="left:282px;top:72px;width:57px;height:22px;background:#4f4f4f;border-radius:4px;box-shadow:0 0 0 0.6px rgba(0,0,0,0.35);"></div>
<div class="r" style="left:310px;top:75px;width:1px;height:16px;background:#3c3c3c;"></div>
<div class="t" style="left:288.00px;top:77.00px;font-size:13px;line-height:13px;color:#dcdcdc;font-weight:normal;font-family:'Liberation Sans', sans-serif;transform:scaleX(1.3839);transform-origin:0 0;">A</div>
<svg class="r" style="left:300px;top:78px;" width="8" height="5" viewBox="0 0 8 5"><path d="M0 4.5 L7 4.5 L3.5 0 Z" fill="#5a98ec"/></svg>
<div class="t" style="left:317.00px;top:78.19px;font-size:11px;line-height:11px;color:#dcdcdc;font-weight:normal;font-family:'Liberation Sans', sans-serif;transform:scaleX(1.2267);transform-origin:0 0;">A</div>
<svg class="r" style="left:327px;top:80px;" width="8" height="5" viewBox="0 0 8 5"><path d="M0 0 L7 0 L3.5 4.5 Z" fill="#5a98ec"/></svg>
<div class="r" style="left:116px;top:102px;width:97px;height:22px;background:#4f4f4f;border-radius:4px;box-shadow:0 0 0 0.6px rgba(0,0,0,0.35);"></div>
<div class="r" style="left:174px;top:102px;width:28px;height:22px;background:#2f2f2f;border-radius:0;"></div>
<div class="r" style="left:144.5px;top:105px;width:1px;height:16px;background:#3c3c3c;"></div>
<div class="t" style="left:125.80px;top:108.27px;font-size:11.5px;line-height:11.5px;color:#e0e0e0;font-weight:bold;font-family:'Liberation Sans', sans-serif;transform:scaleX(0.9502);transform-origin:0 0;">G</div>
<div class="t" style="left:154.00px;top:108.27px;font-size:11.5px;line-height:11.5px;color:#e0e0e0;font-weight:normal;font-family:'Liberation Sans', sans-serif;font-style:italic;transform:scaleX(1.0837);transform-origin:0 0;">C</div>
<div class="t" style="left:183.00px;top:107.77px;font-size:11.5px;line-height:11.5px;color:#e8e8e8;font-weight:normal;font-family:'Liberation Sans', sans-serif;transform:scaleX(1.0430);transform-origin:0 0;">S</div>
<div class="r" style="left:183px;top:119.3px;width:10px;height:1px;background:#e8e8e8;"></div>
<div class="r" style="left:202px;top:102px;width:11px;height:22px;background:#3f3f3f;border-radius:0 4px 4px 0;"></div>
<svg class="r" style="left:204.5px;top:110.75px;" width="6" height="4.5" viewBox="0 0 6 4.5"><path d="M0 0 L6 0 L3.0 4.5 Z" fill="#dadada"/></svg>
<div class="r" style="left:219px;top:102px;width:38px;height:22px;background:#4f4f4f;border-radius:4px;box-shadow:0 0 0 0.6px rgba(0,0,0,0.35);"></div>
<div class="r" style="left:246px;top:105px;width:1px;height:16px;background:#3c3c3c;"></div>
<svg class="r" style="left:223px;top:104px;" width="18" height="18" viewBox="0 0 18 18"><g fill="#8a8a8a"><rect x="1" y="1" width="1" height="1"/><rect x="1" y="8" width="1" height="1"/><rect x="3" y="1" width="1" height="1"/><rect x="3" y="8" width="1" height="1"/><rect x="5" y="1" width="1" height="1"/><rect x="5" y="8" width="1" height="1"/><rect x="7" y="1" width="1" height="1"/><rect x="7" y="8" width="1" height="1"/><rect x="9" y="1" width="1" height="1"/><rect x="9" y="8" width="1" height="1"/><rect x="11" y="1" width="1" height="1"/><rect x="11" y="8" width="1" height="1"/><rect x="13" y="1" width="1" height="1"/><rect x="13" y="8" width="1" height="1"/><rect x="15" y="1" width="1" height="1"/><rect x="15" y="8" width="1" height="1"/><rect x="1" y="1" width="1" height="1"/><rect x="1" y="3" width="1" height="1"/><rect x="1" y="5" width="1" height="1"/><rect x="1" y="7" width="1" height="1"/><rect x="1" y="9" width="1" height="1"/><rect x="1" y="11" width="1" height="1"/><rect x="1" y="13" width="1" height="1"/><rect x="1" y="15" width="1" height="1"/><rect x="8" y="1" width="1" height="1"/><rect x="8" y="3" width="1" height="1"/><rect x="8" y="5" width="1" height="1"/><rect x="8" y="7" width="1" height="1"/><rect x="8" y="9" width="1" height="1"/><rect x="8" y="11" width="1" height="1"/><rect x="8" y="13" width="1" height="1"/><rect x="8" y="15" width="1" height="1"/><rect x="16" y="1" width="1" height="1"/><rect x="16" y="3" width="1" height="1"/><rect x="16" y="5" width="1" height="1"/><rect x="16" y="7" width="1" height="1"/><rect x="16" y="9" width="1" height="1"/><rect x="16" y="11" width="1" height="1"/><rect x="16" y="13" width="1" height="1"/><rect x="16" y="15" width="1" height="1"/></g><rect x="1" y="15.5" width="16" height="1.3" fill="#d0d0d0"/></svg>
<svg class="r" style="left:248.5px;top:110.75px;" width="6" height="4.5" viewBox="0 0 6 4.5"><path d="M0 0 L6 0 L3.0 4.5 Z" fill="#dadada"/></svg>
<div class="r" style="left:263px;top:102px;width:76px;height:22px;background:#4f4f4f;border-radius:4px;box-shadow:0 0 0 0.6px rgba(0,0,0,0.35);"></div>
<div class="r" style="left:287.5px;top:105px;width:1px;height:16px;background:#3c3c3c;"></div>
<div class="r" style="left:299px;top:105px;width:1px;height:16px;background:#3c3c3c;"></div>
<div class="r" style="left:327.5px;top:105px;width:1px;height:16px;background:#3c3c3c;"></div>
<svg class="r" style="left:264px;top:102px;" width="22" height="22" viewBox="0 0 22 22"><g transform="rotate(40 10 9.5)"><rect x="5" y="4.5" width="10" height="10" rx="1" fill="#f2f2f2"/><rect x="5" y="7.3" width="10" height="1.6" fill="#5a90dd"/><rect x="5" y="10.3" width="10" height="1.6" fill="#5a90dd"/><path d="M7.5 4.5 L7.5 1.8 Q10 -0.5 12.5 1.8 L12.5 4.5" fill="none" stroke="#e0e0e0" stroke-width="1"/></g><path d="M15.5 5.5 Q19.5 6.5 18.5 12" fill="none" stroke="#5a90dd" stroke-width="2"/><rect x="1" y="15" width="18" height="5.3" fill="#f8f43c"/></svg>
<svg class="r" style="left:290.0px;top:110.75px;" width="6" height="4.5" viewBox="0 0 6 4.5"><path d="M0 0 L6 0 L3.0 4.5 Z" fill="#dadada"/></svg>
<div class="t" style="left:309.00px;top:103.15px;font-size:14px;line-height:14px;color:#e6e6e6;font-weight:normal;font-family:'Liberation Sans', sans-serif;transform:scaleX(1.1244);transform-origin:0 0;">A</div>
<div class="r" style="left:305px;top:117px;width:18.5px;height:5px;background:#d50000;"></div>
<svg class="r" style="left:330.0px;top:110.75px;" width="6" height="4.5" viewBox="0 0 6 4.5"><path d="M0 0 L6 0 L3.0 4.5 Z" fill="#dadada"/></svg>
<div class="r" style="left:358px;top:72px;width:86.60000000000002px;height:22px;background:#4f4f4f;border-radius:4px;box-shadow:0 0 0 0.6px rgba(0,0,0,0.35);"></div>
<div class="r" style="left:416px;top:72px;width:28.600000000000023px;height:22px;background:#2f2f2f;border-radius:0 4px 4px 0;"></div>
<div class="r" style="left:386.6px;top:75px;width:1px;height:16px;background:#3c3c3c;"></div>
<div class="r" style="left:366px;top:78px;width:12px;height:1.3px;background:#e6e6e6;"></div>
<div class="r" style="left:366px;top:81.2px;width:12px;height:1.3px;background:#e6e6e6;"></div>
<div class="r" style="left:395px;top:82px;width:12px;height:1.3px;background:#e6e6e6;"></div>
<div class="r" style="left:395px;top:85.2px;width:12px;height:1.3px;background:#e6e6e6;"></div>
<div class="r" style="left:424px;top:86px;width:12px;height:1.3px;background:#e6e6e6;"></div>
<div class="r" style="left:424px;top:89.2px;width:12px;height:1.3px;background:#e6e6e6;"></div>
<div class="r" style="left:450px;top:72px;width:35px;height:22px;background:#4f4f4f;border-radius:4px;box-shadow:0 0 0 0.6px rgba(0,0,0,0.35);"></div>
<svg class="r" style="left:453px;top:73px;" width="26" height="20" viewBox="0 0 26 20"><text x="0" y="0" transform="translate(5.8,15.6) rotate(-45)" font-family="Liberation Sans" font-size="11.5" font-weight="bold" fill="#e0e0e0">ab</text><path d="M9 18 L18.3 8.7" stroke="#5a98ec" stroke-width="1.1"/><path d="M15.6 8.2 L19.6 7.4 L18.8 11.4 Z" fill="#5a98ec"/></svg>
<svg class="r" style="left:476.3px;top:80.89999999999999px;" width="6" height="4.8" viewBox="0 0 6 4.8"><path d="M0 0 L6 0 L3.0 4.8 Z" fill="#dadada"/></svg>
<div class="r" style="left:358px;top:102px;width:86.60000000000002px;height:22px;background:#4f4f4f;border-radius:4px;box-shadow:0 0 0 0.6px rgba(0,0,0,0.35);"></div>
<div class="r" style="left:386.6px;top:105px;width:1px;height:16px;background:#3c3c3c;"></div>
<div class="r" style="left:416px;top:105px;width:1px;height:16px;background:#3c3c3c;"></div>
<div class="r" style="left:365px;top:107.5px;width:13px;height:1.3px;background:#e6e6e6;"></div>
<div class="r" style="left:365px;top:110.7px;width:9px;height:1.3px;background:#e6e6e6;"></div>
<div class="r" style="left:365px;top:113.9px;width:15px;height:1.3px;background:#e6e6e6;"></div>
<div class="r" style="left:365px;top:117.1px;width:11px;height:1.3px;background:#e6e6e6;"></div>
<div class="r" style="left:395px;top:107.5px;width:13px;height:1.3px;background:#e6e6e6;"></div>
<div class="r" style="left:397px;top:110.7px;width:9px;height:1.3px;background:#e6e6e6;"></div>
<div class="r" style="left:394px;top:113.9px;width:15px;height:1.3px;background:#e6e6e6;"></div>
<div class="r" style="left:396px;top:117.1px;width:11px;height:1.3px;background:#e6e6e6;"></div>
<div class="r" style="left:425px;top:107.5px;width:13px;height:1.3px;background:#e6e6e6;"></div>
<div class="r" style="left:429px;top:110.7px;width:9px;height:1.3px;background:#e6e6e6;"></div>
<div class="r" style="left:423px;top:113.9px;width:15px;height:1.3px;background:#e6e6e6;"></div>
<div class="r" style="left:427px;top:117.1px;width:11px;height:1.3px;background:#e6e6e6;"></div>
<div class="r" style="left:450px;top:102px;width:57px;height:22px;background:#4f4f4f;border-radius:4px;box-shadow:0 0 0 0.6px rgba(0,0,0,0.35);"></div>
<div class="r" style="left:478.5px;top:105px;width:1px;height:16px;background:#3c3c3c;"></div>
<div class="r" style="left:463px;top:107.5px;width:9px;height:1.3px;background:#e6e6e6;"></div>
<div class="r" style="left:465px;top:110.7px;width:7px;height:1.3px;background:#e6e6e6;"></div>
<div class="r" style="left:465px;top:113.9px;width:7px;height:1.3px;background:#e6e6e6;"></div>
<div class="r" style="left:463px;top:117.1px;width:9px;height:1.3px;background:#e6e6e6;"></div>
<svg class="r" style="left:455px;top:106px;" width="9" height="12" viewBox="0 0 9 12"><path d="M0.5 6 L5 1.5 L5 4 L8.5 4 L8.5 8 L5 8 L5 10.5 Z" fill="#5a98ec"/></svg>
<div class="r" style="left:491px;top:107.5px;width:9px;height:1.3px;background:#e6e6e6;"></div>
<div class="r" style="left:493px;top:110.7px;width:7px;height:1.3px;background:#e6e6e6;"></div>
<div class="r" style="left:493px;top:113.9px;width:7px;height:1.3px;background:#e6e6e6;"></div>
<div class="r" style="left:491px;top:117.1px;width:9px;height:1.3px;background:#e6e6e6;"></div>
<svg class="r" style="left:482px;top:106px;" width="9" height="12" viewBox="0 0 9 12"><path d="M8.5 6 L4 1.5 L4 4 L0.5 4 L0.5 8 L4 8 L4 10.5 Z" fill="#5a98ec"/></svg>
<svg class="r" style="left:529px;top:76px;" width="24" height="16" viewBox="0 0 24 16"><rect x="1" y="1" width="13" height="13" fill="#f0f0f0"/><path d="M3 4 L12 4 M3 7 L9 7 M3 10 L12 10" stroke="#999" stroke-width="0.9"/><path d="M14 4 L17 4 Q21 4 21 8 Q21 11.5 17.5 11.5" fill="none" stroke="#5a98ec" stroke-width="1.5"/><path d="M18.5 9 L15.5 11.5 L18.5 14 Z" fill="#5a98ec"/></svg>
<svg class="r" style="left:624.0px;top:80.25px;" width="6" height="4.5" viewBox="0 0 6 4.5"><path d="M0 0 L6 0 L3.0 4.5 Z" fill="#d0d0d0"/></svg>
<svg class="r" style="left:530px;top:104px;" width="19" height="18" viewBox="0 0 19 18"><rect x="1" y="1" width="17" height="16" fill="#f0f0f0"/><path d="M1 4.5 L18 4.5 M1 13.5 L18 13.5 M9.5 1 L9.5 4.5 M9.5 13.5 L9.5 17" stroke="#888" stroke-width="0.8"/><path d="M4 9 L15 9" stroke="#5a98ec" stroke-width="1"/><path d="M3 9 L5.5 7 L5.5 11 Z M16 9 L13.5 7 L13.5 11 Z" fill="#5a98ec"/></svg>
<svg class="r" style="left:635.0px;top:110.25px;" width="6" height="4.5" viewBox="0 0 6 4.5"><path d="M0 0 L6 0 L3.0 4.5 Z" fill="#d0d0d0"/></svg>
<div class="r" style="left:663px;top:72px;width:157px;height:22px;background:#4f4f4f;border-radius:4px;box-shadow:0 0 0 0.6px rgba(0,0,0,0.35);"></div>
<div class="r" style="left:806.5px;top:75px;width:1px;height:16px;background:#3c3c3c;"></div>
<div class="t" style="left:667.00px;top:75.59px;font-size:12.3px;line-height:12.3px;color:#f2f2f2;font-weight:normal;font-family:'Liberation Sans', sans-serif;transform:scaleX(0.9882);transform-origin:0 0;">Generale</div>
<svg class="r" style="left:810.5px;top:80.75px;" width="6" height="4.5" viewBox="0 0 6 4.5"><path d="M0 0 L6 0 L3.0 4.5 Z" fill="#dadada"/></svg>
<div class="r" style="left:663px;top:102px;width:94px;height:22px;background:#4f4f4f;border-radius:4px;box-shadow:0 0 0 0.6px rgba(0,0,0,0.35);"></div>
<div class="r" style="left:687px;top:105px;width:1px;height:16px;background:#3c3c3c;"></div>
<div class="r" style="left:699.4px;top:105px;width:1px;height:16px;background:#3c3c3c;"></div>
<div class="r" style="left:728.8px;top:105px;width:1px;height:16px;background:#3c3c3c;"></div>
<svg class="r" style="left:665px;top:104px;" width="22" height="18" viewBox="0 0 22 18"><g fill="#d8b458" stroke="#8c6a20" stroke-width="0.5"><ellipse cx="14" cy="13" rx="6" ry="2.2"/><rect x="8" y="4" width="12" height="9" fill="#d8b458" stroke="none"/><ellipse cx="14" cy="10" rx="6" ry="2.2"/><ellipse cx="14" cy="7" rx="6" ry="2.2"/><ellipse cx="14" cy="4" rx="6" ry="2.2" fill="#f0d070"/><ellipse cx="7" cy="15" rx="6" ry="2.2"/><rect x="1" y="10" width="12" height="5" fill="#d8b458" stroke="none"/><ellipse cx="7" cy="12.5" rx="6" ry="2.2"/><ellipse cx="7" cy="10" rx="6" ry="2.2" fill="#f0d070"/></g></svg>
<svg class="r" style="left:690.0px;top:110.75px;" width="6" height="4.5" viewBox="0 0 6 4.5"><path d="M0 0 L6 0 L3.0 4.5 Z" fill="#dadada"/></svg>
<div class="t" style="left:706.60px;top:105.41px;font-size:17px;line-height:17px;color:#e6e6e6;font-weight:normal;font-family:'Liberation Sans', sans-serif;transform:scaleX(0.9527);transform-origin:0 0;">%</div>
<div class="t" style="left:733.90px;top:108.36px;font-size:9.5px;line-height:9.5px;color:#d6d6d6;font-weight:normal;font-family:'Liberation Sans', sans-serif;transform:scaleX(1.0788);transform-origin:0 0;">000</div>
<div class="r" style="left:763px;top:102px;width:57px;height:22px;background:#4f4f4f;border-radius:4px;box-shadow:0 0 0 0.6px rgba(0,0,0,0.35);"></div>
<div class="r" style="left:791.7px;top:105px;width:1px;height:16px;background:#3c3c3c;"></div>
<svg class="r" style="left:763px;top:102px;" width="57" height="22" viewBox="0 0 57 22"><path d="M5.8 7.5 L10.8 3.6 L10.8 6.1 L14.2 6.1 L14.2 8.9 L10.8 8.9 L10.8 11.4 Z" fill="#5a98ec"/><text x="22.8" y="10.2" text-anchor="end" font-family="Liberation Sans" font-size="9.5" font-weight="bold" fill="#e6e6e6">,0</text><text x="22.8" y="18.6" text-anchor="end" font-family="Liberation Sans" font-size="9.5" font-weight="bold" fill="#e6e6e6">,00</text><text x="51.5" y="10.2" text-anchor="end" font-family="Liberation Sans" font-size="9.5" font-weight="bold" fill="#e6e6e6">,00</text><path d="M43.2 15.5 L38.2 11.6 L38.2 14.1 L34.8 14.1 L34.8 16.9 L38.2 16.9 L38.2 19.4 Z" fill="#5a98ec"/><text x="51.5" y="18.6" text-anchor="end" font-family="Liberation Sans" font-size="9.5" font-weight="bold" fill="#e6e6e6">,0</text></svg>
<svg class="r" style="left:855px;top:72px;" width="32" height="30" viewBox="0 0 32 30"><rect x="1.5" y="1.5" width="24" height="22" fill="#f4f4f4"/><path d="M1.5 7 L25.5 7 M1.5 12.5 L25.5 12.5 M1.5 18 L25.5 18 M7.5 1.5 L7.5 23.5 M13.5 1.5 L13.5 23.5 M19.5 1.5 L19.5 23.5" stroke="#d0d0d0" stroke-width="0.6"/><rect x="7.5" y="1.5" width="6" height="5.5" fill="#d66a6a"/><rect x="7.5" y="7" width="9" height="5.5" fill="#6ea0e6"/><rect x="7.5" y="12.5" width="12" height="5.5" fill="#d66a6a"/><rect x="7.5" y="18" width="6" height="5.5" fill="#6ea0e6"/><rect x="15" y="15.5" width="15" height="12.5" fill="#f8f8f8" stroke="#555" stroke-width="0.6"/><text x="22.5" y="26" text-anchor="middle" font-family="Liberation Sans" font-size="11" fill="#222">&#8800;</text></svg>
<svg class="r" style="left:889.0px;top:83.75px;" width="6" height="4.5" viewBox="0 0 6 4.5"><path d="M0 0 L6 0 L3.0 4.5 Z" fill="#d0d0d0"/></svg>
<svg class="r" style="left:929px;top:74px;" width="36" height="28" viewBox="0 0 36 28"><rect x="1.5" y="1.5" width="26" height="21" fill="#f4f4f4"/><rect x="7" y="6" width="20.5" height="16.5" fill="#d4e2f6"/><path d="M1.5 6 L27.5 6 M1.5 11.5 L27.5 11.5 M1.5 17 L27.5 17 M7 1.5 L7 22.5 M13.5 1.5 L13.5 22.5 M20 1.5 L20 22.5" stroke="#bfc9d6" stroke-width="0.7"/><path d="M15 19.5 L30.5 3.5 Q32.5 2 33.5 3.5 Q34 5 32.5 6.5 L18 21.5 Z" fill="#e0e0e0" stroke="#999" stroke-width="0.4"/><circle cx="15.3" cy="21" r="4" fill="#c8a060"/><path d="M9 27 Q11 22 13 20.5 L18 24 Q15 27.5 9 27 Z" fill="#4d87dc"/></svg>
<svg class="r" style="left:964.0px;top:83.75px;" width="6" height="4.5" viewBox="0 0 6 4.5"><path d="M0 0 L6 0 L3.0 4.5 Z" fill="#d0d0d0"/></svg>
<svg class="r" style="left:991px;top:74px;" width="36" height="28" viewBox="0 0 36 28"><rect x="1.5" y="1.5" width="26" height="21" fill="#f4f4f4"/><rect x="5" y="5" width="19" height="14" fill="#d4e2f6"/><path d="M1.5 5 L27.5 5 M1.5 19 L27.5 19 M5 1.5 L5 22.5 M24 1.5 L24 22.5" stroke="#bfc9d6" stroke-width="0.7"/><path d="M15 19.5 L30.5 3.5 Q32.5 2 33.5 3.5 Q34 5 32.5 6.5 L18 21.5 Z" fill="#e0e0e0" stroke="#999" stroke-width="0.4"/><circle cx="15.3" cy="21" r="4" fill="#c8a060"/><path d="M9 27 Q11 22 13 20.5 L18 24 Q15 27.5 9 27 Z" fill="#4d87dc"/></svg>
<svg class="r" style="left:1026.0px;top:83.75px;" width="6" height="4.5" viewBox="0 0 6 4.5"><path d="M0 0 L6 0 L3.0 4.5 Z" fill="#d0d0d0"/></svg>
<svg class="r" style="left:1062px;top:73px;" width="17.0" height="13.0" viewBox="0 0 17.0 13.0"><rect x="0" y="0" width="17.0" height="13.0" fill="#f4f4f4"/><rect x="8.1" y="0" width="0.8" height="13.0" fill="#bdbdbd"/><rect x="0" y="6.1" width="17.0" height="0.8" fill="#bdbdbd"/></svg>
<svg class="r" style="left:1062px;top:86px;" width="17.0" height="13.0" viewBox="0 0 17.0 13.0"><rect x="0" y="0" width="17.0" height="13.0" fill="#f4f4f4"/><rect x="8.1" y="0" width="0.8" height="13.0" fill="#bdbdbd"/><rect x="0" y="6.1" width="17.0" height="0.8" fill="#bdbdbd"/></svg>
<svg class="r" style="left:1054px;top:79px;" width="34" height="9" viewBox="0 0 34 9"><rect x="8" y="0.5" width="25" height="8" fill="#6cb35a"/><path d="M12 0.5 L12 8.5 M20.5 0.5 L20.5 8.5 M29 0.5 L29 8.5" stroke="#4e8f42" stroke-width="0.7"/><path d="M0.5 4.5 L6 0 L6 3 L9 3 L9 6 L6 6 L6 9 Z" fill="#6cb35a"/></svg>
<svg class="r" style="left:1092.0px;top:84.25px;" width="6" height="4.5" viewBox="0 0 6 4.5"><path d="M0 0 L6 0 L3.0 4.5 Z" fill="#d0d0d0"/></svg>
<svg class="r" style="left:1114px;top:73px;" width="17.0" height="13.0" viewBox="0 0 17.0 13.0"><rect x="0" y="0" width="17.0" height="13.0" fill="#f4f4f4"/><rect x="8.1" y="0" width="0.8" height="13.0" fill="#bdbdbd"/><rect x="0" y="6.1" width="17.0" height="0.8" fill="#bdbdbd"/></svg>
<svg class="r" style="left:1114px;top:86px;" width="17.0" height="13.0" viewBox="0 0 17.0 13.0"><rect x="0" y="0" width="17.0" height="13.0" fill="#f4f4f4"/><rect x="8.1" y="0" width="0.8" height="13.0" fill="#bdbdbd"/><rect x="0" y="6.1" width="17.0" height="0.8" fill="#bdbdbd"/></svg>
<svg class="r" style="left:1106px;top:79px;" width="34" height="10" viewBox="0 0 34 10"><rect x="1" y="0.5" width="25" height="8" fill="#d9534f"/><path d="M9 0.5 L9 8.5 M17.5 0.5 L17.5 8.5" stroke="#a83a36" stroke-width="0.7"/><path d="M27.5 1.5 L33 7.5 M33 1.5 L27.5 7.5" stroke="#d9534f" stroke-width="1.8"/></svg>
<svg class="r" style="left:1144.0px;top:84.25px;" width="6" height="4.5" viewBox="0 0 6 4.5"><path d="M0 0 L6 0 L3.0 4.5 Z" fill="#d0d0d0"/></svg>
<svg class="r" style="left:1158px;top:71px;" width="32" height="30" viewBox="0 0 32 30"><path d="M2 2 L2 6 M28 2 L28 6 M4 4 L26 4" stroke="#5a98ec" stroke-width="1.4"/><path d="M4 4 L7.5 1.5 L7.5 6.5 Z M26 4 L22.5 1.5 L22.5 6.5 Z" fill="#5a98ec"/><rect x="1.5" y="9" width="28" height="20" fill="#f4f4f4"/><path d="M1.5 15.5 L29.5 15.5 M1.5 22 L29.5 22 M8.5 9 L8.5 29 M15.5 9 L15.5 29 M22.5 9 L22.5 29" stroke="#c8c8c8" stroke-width="0.7"/><rect x="8.5" y="15.5" width="7" height="6.5" fill="#4d87dc"/><rect x="8.5" y="15.5" width="7" height="6.5" fill="none" stroke="#2f5fa8" stroke-width="0.7"/></svg>
<svg class="r" style="left:1193.0px;top:84.25px;" width="6" height="4.5" viewBox="0 0 6 4.5"><path d="M0 0 L6 0 L3.0 4.5 Z" fill="#d0d0d0"/></svg>
<svg class="r" style="left:1226px;top:67px;" width="17" height="17" viewBox="0 0 17 17"><path d="M1.5 1.5 L14.5 1.5 L14.5 4 M1.5 1.5 L8.3 8.5 L1.5 15.5 L14.5 15.5 L14.5 13" fill="none" stroke="#cfcfcf" stroke-width="2" stroke-linejoin="miter"/></svg>
<svg class="r" style="left:1247.0px;top:71.75px;" width="6" height="4.5" viewBox="0 0 6 4.5"><path d="M0 0 L6 0 L3.0 4.5 Z" fill="#d0d0d0"/></svg>
<svg class="r" style="left:1227px;top:89px;" width="16" height="17" viewBox="0 0 16 17"><rect x="0.5" y="0.5" width="14" height="16" fill="#f0f0f0"/><rect x="0.5" y="0.5" width="14" height="3" fill="#bdbdbd"/><path d="M7.5 5.5 L7.5 10" stroke="#3f7fe0" stroke-width="1.6"/><path d="M4 9 L11 9 L7.5 13 Z" fill="#3f7fe0"/></svg>
<svg class="r" style="left:1245.0px;top:95.25px;" width="6" height="4.5" viewBox="0 0 6 4.5"><path d="M0 0 L6 0 L3.0 4.5 Z" fill="#d0d0d0"/></svg>
<svg class="r" style="left:1226px;top:111px;" width="18" height="18" viewBox="0 0 18 18"><path d="M2 13 L10.5 4.5 Q12 3 13.5 4.5 L15.5 6.5 Q17 8 15.5 9.5 L7 18 Q5.5 19 4 17.5 L2 15.5 Q1 14.5 2 13 Z" fill="#e596b4" transform="translate(0,-1.5)"/><path d="M2 13 L7 18" stroke="#b86a88" stroke-width="0.8" transform="translate(0,-1.5)"/></svg>
<svg class="r" style="left:1245.0px;top:118.75px;" width="6" height="4.5" viewBox="0 0 6 4.5"><path d="M0 0 L6 0 L3.0 4.5 Z" fill="#d0d0d0"/></svg>
<div class="t" style="left:1266.00px;top:72.30px;font-size:15px;line-height:15px;color:#5a98ec;font-weight:normal;font-family:'Liberation Sans', sans-serif;-webkit-text-stroke:0.3px #5a98ec;">A</div>
<div class="t" style="left:1267.50px;top:86.23px;font-size:14.5px;line-height:14.5px;color:#9a9a9a;font-weight:normal;font-family:'Liberation Sans', sans-serif;-webkit-text-stroke:0.3px #9a9a9a;">Z</div>
<svg class="r" style="left:1279px;top:76px;" width="20" height="22" viewBox="0 0 20 22"><path d="M1 2 Q10 -1 19 2 L12.5 10 L12.5 20 L7.5 18 L7.5 10 Z" fill="#a8a8a8"/><ellipse cx="10" cy="2.5" rx="8.5" ry="1.8" fill="#d8d8d8"/></svg>
<svg class="r" style="left:1299.0px;top:84.25px;" width="6" height="4.5" viewBox="0 0 6 4.5"><path d="M0 0 L6 0 L3.0 4.5 Z" fill="#d0d0d0"/></svg>
<svg class="r" style="left:1316px;top:70px;" width="34" height="32" viewBox="0 0 34 32"><circle cx="20" cy="12" r="9" fill="#ffffff" stroke="#4d7fcf" stroke-width="3"/><path d="M13.3 18.7 L4 28.5" stroke="#4d7fcf" stroke-width="3.2" stroke-linecap="round"/></svg>
<svg class="r" style="left:1351.0px;top:84.25px;" width="6" height="4.5" viewBox="0 0 6 4.5"><path d="M0 0 L6 0 L3.0 4.5 Z" fill="#d0d0d0"/></svg>
<svg class="r" style="left:10px;top:857px;" width="40" height="14" viewBox="0 0 40 14"><path d="M11.5 2.5 L5 8 L11.5 13.5 Z" fill="#5e5e5e"/><path d="M28 2.5 L34.5 8 L28 13.5 Z" fill="#5e5e5e"/></svg>
<svg class="r" style="left:152px;top:857px;" width="14" height="14" viewBox="0 0 14 14"><path d="M7 1.5 L7 12.5 M1.5 7 L12.5 7" stroke="#dcdcdc" stroke-width="1.8"/></svg>
<div class="r" style="left:25px;top:841px;width:953px;height:7px;background:rgba(170,170,170,0.58);border-radius:3.5px;"></div>
<svg class="r" style="left:80px;top:880px;" width="20" height="18" viewBox="0 0 20 18"><circle cx="7.5" cy="2.8" r="1.8" fill="none" stroke="#dcdcdc" stroke-width="1"/><path d="M2 5 Q5 7 7.5 6.5 Q10 7 13 5 M5 7 L5.5 11 L3.5 16 M10 7 L9.5 10" fill="none" stroke="#dcdcdc" stroke-width="1"/><path d="M9.5 13 L12 15.5 L17 9.5" fill="none" stroke="#dcdcdc" stroke-width="1.2"/></svg>
<div class="r" style="left:1121px;top:877px;width:37px;height:23px;background:#555555;"></div>
<svg class="r" style="left:1132px;top:881px;" width="16" height="16" viewBox="0 0 16 16"><rect x="1" y="1" width="13.5" height="13.5" fill="none" stroke="#f0f0f0" stroke-width="1.3"/><path d="M5.5 1 L5.5 14.5 M10 1 L10 14.5 M1 5.5 L14.5 5.5 M1 10 L14.5 10" stroke="#f0f0f0" stroke-width="1.2"/></svg>
<svg class="r" style="left:1166px;top:881px;" width="17" height="16" viewBox="0 0 17 16"><rect x="1" y="1" width="14" height="13.5" fill="none" stroke="#dcdcdc" stroke-width="1.2"/><rect x="4" y="3.5" width="8" height="8.5" fill="none" stroke="#dcdcdc" stroke-width="1"/><path d="M5.5 6 L10.5 6 M5.5 8 L10.5 8 M5.5 10 L10.5 10" stroke="#dcdcdc" stroke-width="0.8"/></svg>
<svg class="r" style="left:1203px;top:881px;" width="17" height="16" viewBox="0 0 17 16"><path d="M1 1 L15 1 L15 14.5 L1 14.5 Z M8 1 L8 8 L1 8 M5 1 L5 8" fill="none" stroke="#dcdcdc" stroke-width="1.2"/></svg>
<div class="r" style="left:1236px;top:887.5px;width:9px;height:2px;background:#e0e0e0;"></div>
<div class="r" style="left:1252px;top:886.5px;width:101px;height:4px;background:#8c8c8c;border-radius:2px;"></div>
<div class="r" style="left:1294.5px;top:880.5px;width:16px;height:16px;background:#a6a6a6;border-radius:50%;"></div>
<svg class="r" style="left:1357px;top:882px;" width="12" height="12" viewBox="0 0 12 12"><path d="M6 1 L6 11 M1 6 L11 6" stroke="#e8e8e8" stroke-width="1.8"/></svg>
</body></html>
